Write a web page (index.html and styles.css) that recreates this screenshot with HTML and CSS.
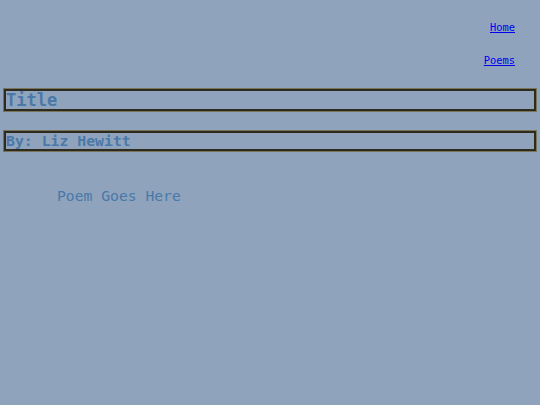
FILE: index.html
```html
<!DOCTYPE html>
<html>
<head>
<meta charset="utf-8">
<title>Title</title>
<link rel="stylesheet" href="styles.css">
</head>
<body>
  <nav class="menu">
    <a href="#">Home</a>
    <a href="#">Poems</a>
  </nav>
  <h1 class="box title">Title</h1>
  <h2 class="box byline">By: Liz Hewitt</h2>
  <p class="poem">Poem Goes Here</p>
</body>
</html>
```

FILE: styles.css
```css
html, body {
  background: #8fa4bc;
}
body {
  margin: 0;
  padding: 0 4px;
  font-family: "DejaVu Sans Mono", monospace;
  color: #4a78a8;
}
.menu {
  display: flex;
  flex-direction: column;
  align-items: flex-end;
  gap: 20px;
  padding: 21px 21px 0 0;
  font-size: 10.4px;
  line-height: 13px;
}
.menu a {
  color: #0000ee;
}
/* framed heading: olive rim around a dark rule */
.box {
  margin: 0;
  border: 2px solid #2e2a1e;
  outline: 1px solid #77745e;
  font-weight: bold;
}
.title {
  margin-top: 22px;
  font-size: 17px;
  line-height: 18px;
}
.byline {
  margin-top: 20px;
  font-size: 14.8px;
  line-height: 16px;
}
.poem {
  margin: 36px 0 0 53px;
  font-size: 14.7px;
}
```
